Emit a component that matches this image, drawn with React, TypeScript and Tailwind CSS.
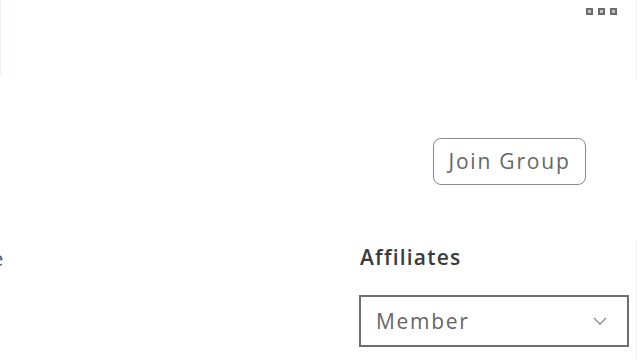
export default function App() {
  return (
    <div
      className="relative w-[640px] h-[360px] overflow-hidden bg-white"
      style={{ fontFamily: '"Open Sans", "Liberation Sans", sans-serif' }}
    >
      {/* faint edges */}
      <div className="absolute left-0 top-0 h-[75px] w-px bg-[#eef3f5]" />
      <div className="absolute right-[3px] top-0 h-[80px] w-px bg-[#eef3f5]" />
      <div className="absolute right-[3px] top-[240px] h-[120px] w-px bg-[#eef3f5]" />
      <span className="absolute left-[-8px] top-[244px] text-[20px] text-[#335a8a]">e</span>

      <div className="flex justify-end pt-[8px] pr-[23px]">
        <div className="flex gap-[5px]">
          {[0, 1, 2].map((i) => (
            <span key={i} className="block w-[7px] h-[7px] border-2 border-[#6b6b6b] bg-[#c8c8c8]" />
          ))}
        </div>
      </div>

      <div className="flex justify-end pr-[54px] mt-[123px]">
        <button className="w-[153px] h-[47px] rounded-[8px] border border-[#8a8a8a] text-[21px] text-[#666] tracking-[1.8px]">
          Join Group
        </button>
      </div>

      <div className="ml-[359px] w-[270px] mt-[58px]">
        <div className="text-[21px] leading-[28px] font-semibold text-[#393b3d] tracking-[1.2px] pl-px">Affiliates</div>
        <div className="mt-[24px] h-[52px] border-2 border-[#6e6e6e] flex items-center justify-between pl-[15px] pr-[20px]">
          <span className="text-[21px] font-medium text-[#666] tracking-[1.7px] pt-[2px]">Member</span>
          <svg width="14" height="8" viewBox="0 0 14 8" fill="none">
            <path d="M1 1l6 6 6-6" stroke="#8a8a8a" strokeWidth="1.3" />
          </svg>
        </div>
      </div>
    </div>
  );
}
